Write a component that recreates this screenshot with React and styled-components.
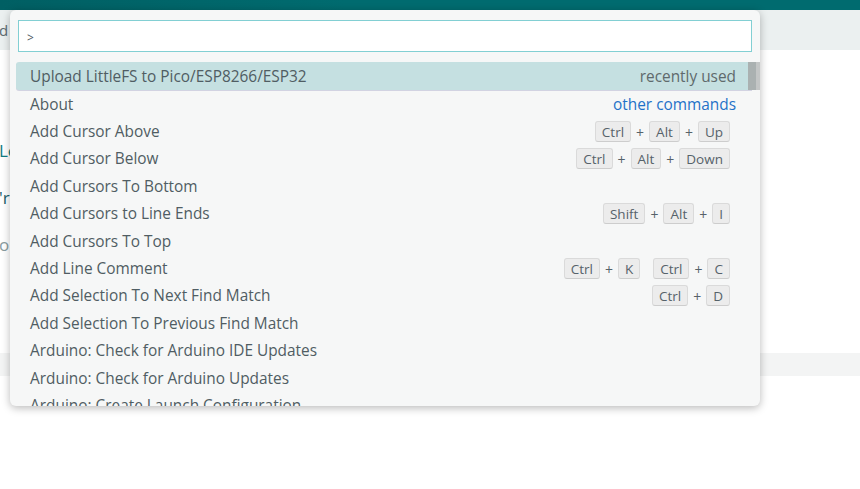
import styled, { createGlobalStyle } from "styled-components";

const Global = createGlobalStyle`
  html, body { margin: 0; padding: 0; background: #fff; }
  body { font-family: "Open Sans", "Noto Sans", sans-serif; overflow: hidden; }
`

const Page = styled.div`
  position: relative;
  width: 860px;
  height: 489px;
  overflow: hidden;
  background: #fff;
`
const TopBar = styled.div`
  height: 10px;
  background: linear-gradient(90deg, #005f63, #006b6f 40%, #006b6f);
`
const Toolbar = styled.div`
  height: 40px;
  background: #ebf0f0;
  display: flex;
  align-items: center;
  font-size: 15px;
  color: #5b6a70;
  & span { margin-left: -1px; }
`
const Content = styled.div`
  height: 303px;
  display: flex;
  flex-direction: column;
  padding-top: 90px;
  gap: 26px;
  box-sizing: border-box;
`
const EdgeText = styled.div`
  font-size: 17px;
  line-height: 21px;
  margin-left: -1px;
  color: ${p => p.$color};
`
const Band = styled.div`
  height: 23px;
  background: #f3f4f4;
`

const Palette = styled.div`
  position: absolute;
  left: 10px;
  top: 10px;
  width: 750px;
  height: 396px;
  background: #f6f7f7;
  border-radius: 6px;
  box-shadow: 0 2px 8px rgba(0,0,0,0.28);
  overflow: hidden;
  display: flex;
  flex-direction: column;
`
const Input = styled.div`
  flex-shrink: 0;
  margin: 10px 8px 0 8px;
  height: 32px;
  box-sizing: border-box;
  border: 1px solid #82cfd3;
  background: #fff;
  display: flex;
  align-items: center;
  padding: 3px 0 0 8px;
  font-size: 12px;
  color: #4e5a60;
`
const List = styled.div`
  position: relative;
  flex-shrink: 0;
  margin-top: 10px;
  padding: 0 8px 0 6px;
`
const Row = styled.div`
  height: ${p => (p.$active ? "28px" : "27.4px")};
  display: flex;
  align-items: center;
  padding: ${p => (p.$active ? "0" : "1px")} 16px 0 14px;
  box-sizing: border-box;
  font-size: 15.4px;
  color: #505d63;
  white-space: nowrap;
  background: ${p => (p.$active ? "#c5e0e1" : "transparent")};
  border-radius: ${p => (p.$active ? "3px 0 0 3px" : "0")};
  box-shadow: ${p => (p.$active ? "0 1px 0 #d2d3e2" : "none")};
`
const Label = styled.span`
  flex: 1;
`
const Hint = styled.span`
  color: ${p => (p.$link ? "#1f72c8" : "#5f6a6c")};
`
const Keys = styled.div`
  display: flex;
  align-items: center;
  margin-right: 6px;
  gap: 13px;
`
const Chord = styled.div`
  display: flex;
  align-items: center;
`
const Kbd = styled.span`
  height: 21px;
  box-sizing: border-box;
  padding: 0 6px;
  display: inline-flex;
  align-items: center;
  font-size: 13.5px;
  color: #56626a;
  background: #ececec;
  border: 1px solid #dadada;
  border-bottom-color: #cdcdcd;
  border-radius: 3px;
`
const Plus = styled.span`
  font-size: 14px;
  color: #56626a;
  margin: 2px 5px 0;
`
const Thumb = styled.div`
  position: absolute;
  right: 4px;
  top: 0;
  width: 8px;
  height: 28px;
  background: #aab1b1;
  box-shadow: 4px 0 0 #c3c6c6;
`

const rows = [
  { label: "Upload LittleFS to Pico/ESP8266/ESP32", hint: "recently used", active: true },
  { label: "About", hint: "other commands", link: true },
  { label: "Add Cursor Above", keys: [["Ctrl", "Alt", "Up"]] },
  { label: "Add Cursor Below", keys: [["Ctrl", "Alt", "Down"]] },
  { label: "Add Cursors To Bottom" },
  { label: "Add Cursors to Line Ends", keys: [["Shift", "Alt", "I"]] },
  { label: "Add Cursors To Top" },
  { label: "Add Line Comment", keys: [["Ctrl", "K"], ["Ctrl", "C"]] },
  { label: "Add Selection To Next Find Match", keys: [["Ctrl", "D"]] },
  { label: "Add Selection To Previous Find Match" },
  { label: "Arduino: Check for Arduino IDE Updates" },
  { label: "Arduino: Check for Arduino Updates" },
  { label: "Arduino: Create Launch Configuration" },
]

export default function App() {
  return (
    <Page>
      <Global />
      <TopBar />
      <Toolbar><span>d</span></Toolbar>
      <Content>
        <EdgeText $color="#0f7a82">Le</EdgeText>
        <EdgeText $color="#1b5f6b">'r</EdgeText>
        <EdgeText $color="#8a9ca0">or</EdgeText>
      </Content>
      <Band />
      <Palette>
        <Input>&gt;</Input>
        <List>
          <Thumb />
          {rows.map(r => (
            <Row key={r.label} $active={r.active}>
              <Label>{r.label}</Label>
              {r.hint && <Hint $link={r.link}>{r.hint}</Hint>}
              {r.keys && (
                <Keys>
                  {r.keys.map((chord, i) => (
                    <Chord key={i}>
                      {chord.map((k, j) => (
                        <span key={k} style={{ display: "contents" }}>
                          {j > 0 && <Plus>+</Plus>}
                          <Kbd>{k}</Kbd>
                        </span>
                      ))}
                    </Chord>
                  ))}
                </Keys>
              )}
            </Row>
          ))}
        </List>
      </Palette>
    </Page>
  )
}
